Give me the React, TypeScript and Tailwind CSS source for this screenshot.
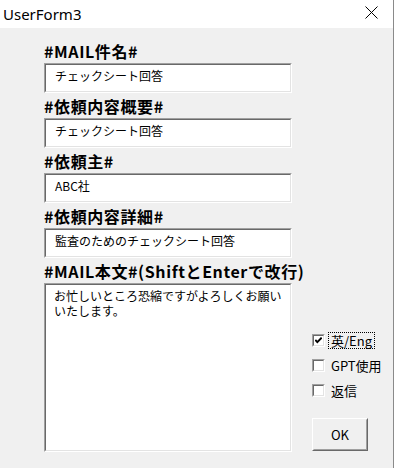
import type { ReactNode } from 'react';

const uiFont = { fontFamily: '"Noto Sans CJK JP", "Noto Sans", sans-serif' };

function Sunken({ children, className = '' }: { children?: ReactNode; className?: string }) {
  return (
    <div className={`border border-t-[#a0a0a0] border-l-[#a0a0a0] border-b-white border-r-white ${className}`}>
      <div className="h-full border border-t-[#696969] border-l-[#696969] border-b-[#e3e3e3] border-r-[#e3e3e3] bg-white">
        {children}
      </div>
    </div>
  );
}

function Field({ label, value, first }: { label: string; value: string; first?: boolean }) {
  return (
    <div className={first ? '' : 'mt-[2px]'}>
      <div className="h-[23px] text-[16px] leading-[23px] font-bold tracking-[0.6px] text-black whitespace-nowrap">{label}</div>
      <Sunken className="h-[30px]">
        <div className="pl-[9px] pt-[3px] text-[12px] leading-[16px] text-black">{value}</div>
      </Sunken>
    </div>
  );
}

function Check({ checked, label, focus }: { checked?: boolean; label: string; focus?: boolean }) {
  return (
    <div className="h-[25px] flex items-center">
      <div className="w-[13px] h-[13px] border border-t-[#a0a0a0] border-l-[#a0a0a0] border-b-white border-r-white">
        <div className="w-full h-full border border-t-[#696969] border-l-[#696969] border-b-[#e3e3e3] border-r-[#e3e3e3] bg-white flex items-center justify-center">
          {checked && (
            <svg width="7" height="7" viewBox="0 0 7 7">
              <path d="M0.3 3 L2.3 5.2 L6.7 0.6" stroke="#000" strokeWidth="1.9" fill="none" />
            </svg>
          )}
        </div>
      </div>
      <span
        className={`ml-[3px] px-[2px] text-[13px] leading-[15px] text-black whitespace-nowrap border border-dotted ${
          focus ? 'border-black' : 'border-transparent'
        }`}
      >
        {label}
      </span>
    </div>
  );
}

export default function App() {
  return (
    <div className="w-[394px] h-[468px] bg-[#f0f0f0] border-r border-[#8a8a8a] overflow-hidden" style={uiFont}>
      {/* Title bar */}
      <div className="h-[28px] bg-white flex items-center justify-between pl-[3px] pr-[15px]">
        <span className="text-[15px] text-black" style={{ fontFamily: '"Noto Sans", sans-serif' }}>
          UserForm3
        </span>
        <svg width="13" height="13" viewBox="0 0 13 13" className="-mt-[4px]">
          <path d="M0.5 0.5 L12.5 12.5 M12.5 0.5 L0.5 12.5" stroke="#000" strokeWidth="1" />
        </svg>
      </div>

      <div className="flex pl-[44px] pt-[12px]">
        {/* Left column */}
        <div className="w-[248px] flex flex-col">
          <Field first label="#MAIL件名#" value="チェックシート回答" />
          <Field label="#依頼内容概要#" value="チェックシート回答" />
          <Field label="#依頼主#" value="ABC社" />
          <Field label="#依頼内容詳細#" value="監査のためのチェックシート回答" />
          <div className="mt-[2px]">
            <div className="h-[23px] text-[16px] leading-[23px] font-bold tracking-[0.6px] text-black whitespace-nowrap">
              #MAIL本文#(ShiftとEnterで改行)
            </div>
            <Sunken className="h-[169px]">
              <div className="pl-[8px] pt-[3px] text-[12px] leading-[15px] text-black whitespace-pre-line">
                {'お忙しいところ恐縮ですがよろしくお願い\nいたします。'}
              </div>
            </Sunken>
          </div>
        </div>

        {/* Right column */}
        <div className="ml-[20px] flex flex-col justify-end pb-[1px]">
          <Check checked focus label="英/Eng" />
          <Check label="GPT使用" />
          <Check label="返信" />
          <button className="mt-[15px] w-[56px] h-[33px] border border-t-white border-l-white border-b-[#696969] border-r-[#696969] bg-[#f0f0f0] text-[13px] text-black">
            <div className="w-full h-full border border-t-[#f0f0f0] border-l-[#f0f0f0] border-b-[#a0a0a0] border-r-[#a0a0a0] flex items-center justify-center">
              OK
            </div>
          </button>
        </div>
      </div>
    </div>
  );
}
